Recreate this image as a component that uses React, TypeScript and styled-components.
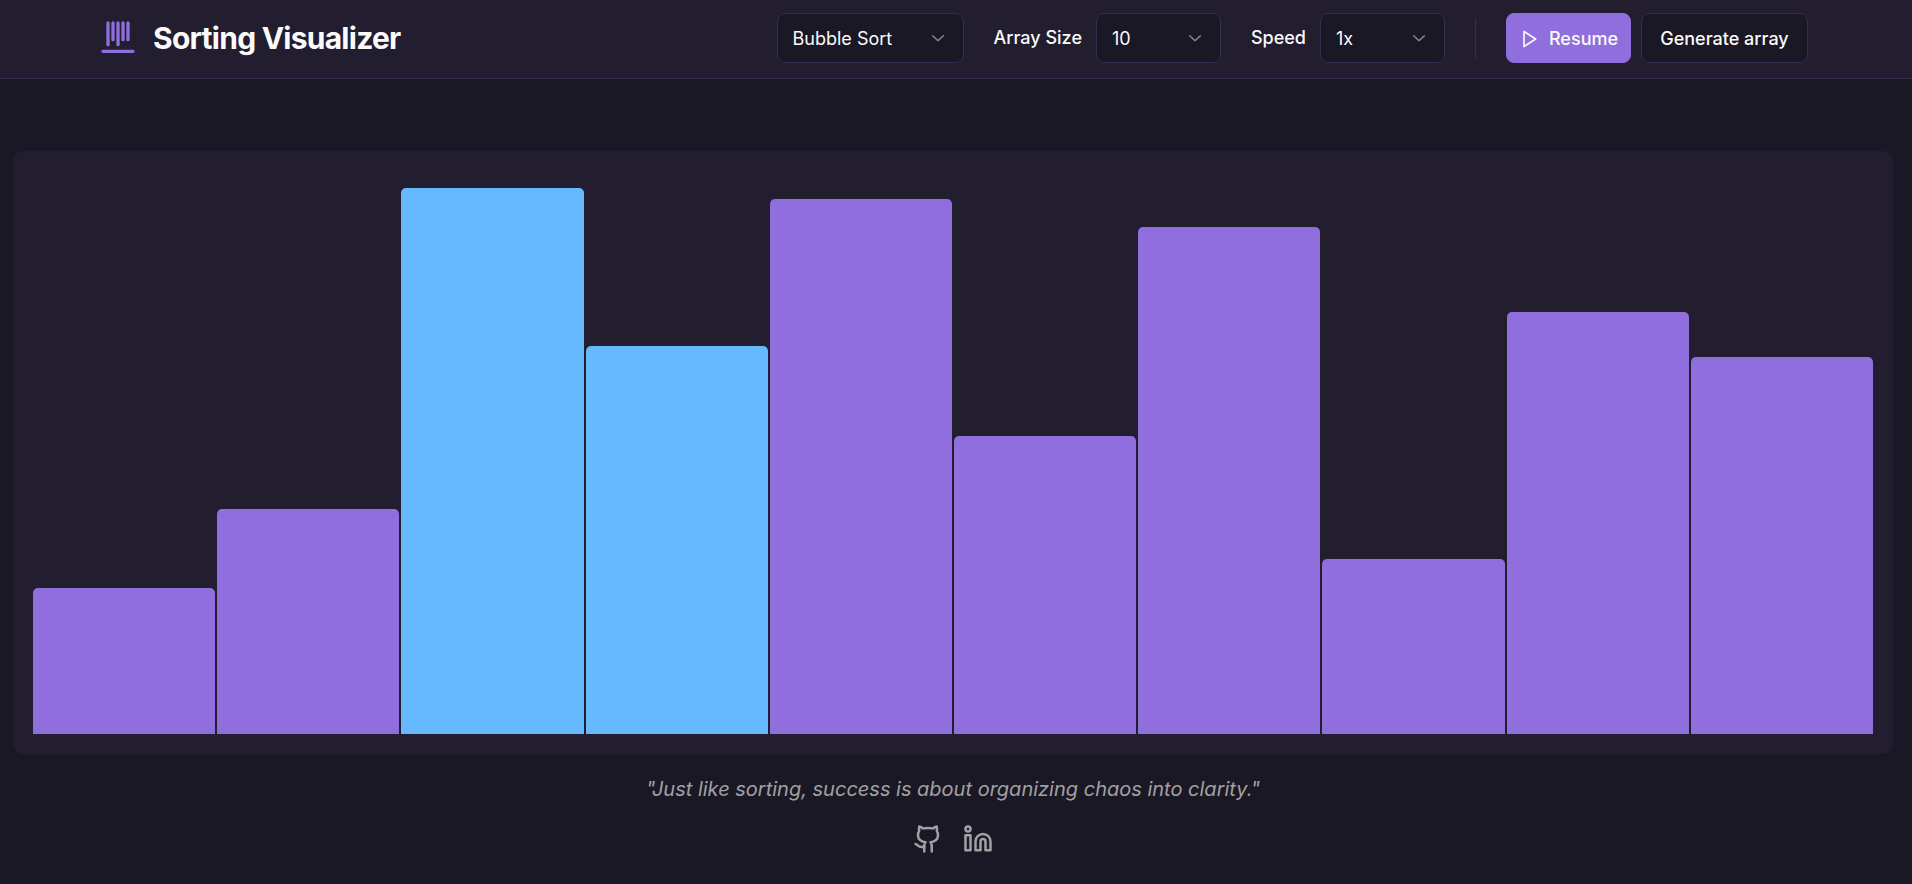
import React, { useState } from "react";
import styled, { createGlobalStyle } from "styled-components";
import { Github, Linkedin } from "lucide-react";

const GlobalStyle = createGlobalStyle`
  *, *::before, *::after { box-sizing: border-box; }
  body {
    margin: 0;
    background: #1b1825;
    color: #fafafa;
    font-family: Inter, "Liberation Sans", sans-serif;
    font-size: 18px;
    line-height: 24px;
  }
`;

const Page = styled.div`
  min-height: 100vh;
  display: flex;
  flex-direction: column;
  padding-right: 6px;
`;

const Header = styled.header`
  margin-right: -6px;
  padding: 13px 6px 15px 0;
  background: #221d2f;
  border-bottom: 1px solid #352d4d;
`;

const HeaderInner = styled.div`
  max-width: 1750px;
  margin: 0 auto;
  padding: 0 20px;
  display: flex;
  align-items: center;
  justify-content: space-between;
`;

const Brand = styled.div`
  display: flex;
  align-items: center;
  gap: 15px;
`;

const Title = styled.h1`
  margin: 0;
  font-size: 30px;
  line-height: 40px;
  font-weight: 700;
  letter-spacing: -0.025em;
`;

const Controls = styled.div`
  display: flex;
  align-items: center;
  gap: 30px;
`;

const Field = styled.div`
  display: flex;
  align-items: center;
  gap: 14px;
`;

const FieldLabel = styled.label`
  font-weight: 500;
`;

const SelectFrame = styled.div<{ $width: number }>`
  position: relative;
  width: ${(p) => p.$width}px;
  color: #8d8b95;

  svg {
    position: absolute;
    top: 14px;
    right: 16px;
    pointer-events: none;
  }
`;

const Select = styled.select`
  appearance: none;
  width: 100%;
  height: 50px;
  padding: 2px 40px 0 15px;
  border: 1px solid #352d4d;
  border-radius: 8px;
  background: #1b1825;
  color: #fafafa;
  font: inherit;
`;

const Divider = styled.div`
  width: 1px;
  height: 40px;
  background: #352d4d;
`;

const Actions = styled.div`
  display: flex;
  gap: 10px;
`;

const Button = styled.button<{ $primary?: boolean }>`
  width: ${(p) => (p.$primary ? 125 : 167)}px;
  height: 50px;
  display: flex;
  align-items: center;
  justify-content: center;
  gap: 10px;
  padding: 2px 0 0;
  border: 1px solid ${(p) => (p.$primary ? "#906edd" : "#352d4d")};
  border-radius: 8px;
  background: ${(p) => (p.$primary ? "#906edd" : "#1b1825")};
  color: #fafafa;
  font: inherit;
  font-weight: 500;
  white-space: nowrap;
`;

const Main = styled.main`
  flex: 1;
  display: flex;
  flex-direction: column;
  padding: 72px 13px 0;
`;

const Chart = styled.section`
  height: calc(100vh - 281px);
  min-height: 240px;
  display: flex;
  align-items: flex-end;
  gap: 2px;
  padding: 20px;
  border-radius: 10px;
  background: #221d2f;
`;

const Bar = styled.div<{ $active: boolean }>`
  flex: 1;
  border-radius: 5px 5px 0 0;
  background: ${(p) => (p.$active ? "#66b8ff" : "#906edd")};
`;

const Footer = styled.footer`
  display: flex;
  flex-direction: column;
  align-items: center;
  gap: 20px;
  padding: 20px 0;
  color: #a1a1a1;
`;

const Quote = styled.p`
  margin: 0;
  font-size: 20px;
  line-height: 30px;
  font-style: italic;
`;

const Links = styled.nav`
  display: flex;
  gap: 20px;
`;

const IconLink = styled.a`
  display: flex;
  color: inherit;
`;

const Logo = () => (
  <svg width="40" height="40" viewBox="0 0 24 24" fill="none" stroke="#906edd" strokeWidth="2" strokeLinecap="round" aria-hidden="true">
    <path d="M6 3v13M9 3v10M12 3v13M15 3v10M18 3v10M3 20h18" />
  </svg>
);

const PlayIcon = () => (
  <svg width="20" height="20" viewBox="0 0 24 24" fill="none" stroke="currentColor" strokeWidth="2" strokeLinecap="round" strokeLinejoin="round" aria-hidden="true">
    <polygon points="6 3 20 12 6 21 6 3" />
  </svg>
);

const Chevron = () => (
  <svg width="20" height="20" viewBox="0 0 15 15" fill="none" stroke="currentColor" strokeLinecap="round" strokeLinejoin="round" aria-hidden="true">
    <path d="M3.5 6.5 7.5 10.25 11.5 6.5" />
  </svg>
);

type DropdownProps = {
  id: string;
  width: number;
  options: string[];
  name?: string;
};

function Dropdown({ id, width, options, name }: DropdownProps) {
  return (
    <SelectFrame $width={width}>
      <Select id={id} aria-label={name}>
        {options.map((o) => (
          <option key={o}>{o}</option>
        ))}
      </Select>
      <Chevron />
    </SelectFrame>
  );
}

const values = [26, 40, 97, 69, 95, 53, 90, 31, 75, 67];

export default function App() {
  const [compared] = useState([2, 3]);
  return (
    <>
      <GlobalStyle />
      <Page>
        <Header>
          <HeaderInner>
            <Brand>
              <Logo />
              <Title>Sorting Visualizer</Title>
            </Brand>
            <Controls>
              <Dropdown id="algorithm" name="Algorithm" width={187} options={["Bubble Sort"]} />
              <Field>
                <FieldLabel htmlFor="size">Array Size</FieldLabel>
                <Dropdown id="size" width={125} options={["10"]} />
              </Field>
              <Field>
                <FieldLabel htmlFor="speed">Speed</FieldLabel>
                <Dropdown id="speed" width={125} options={["1x"]} />
              </Field>
              <Divider />
              <Actions>
                <Button type="button" $primary>
                  <PlayIcon />
                  Resume
                </Button>
                <Button type="button">Generate array</Button>
              </Actions>
            </Controls>
          </HeaderInner>
        </Header>
        <Main>
          <Chart aria-label="Array values">
            {values.map((v, i) => (
              <Bar key={i} $active={compared.includes(i)} style={{ height: `${v}%` }} />
            ))}
          </Chart>
          <Footer>
            <Quote>"Just like sorting, success is about organizing chaos into clarity."</Quote>
            <Links>
              <IconLink href="#github" aria-label="GitHub">
                <Github size={30} />
              </IconLink>
              <IconLink href="#linkedin" aria-label="LinkedIn">
                <Linkedin size={30} />
              </IconLink>
            </Links>
          </Footer>
        </Main>
      </Page>
    </>
  );
}
